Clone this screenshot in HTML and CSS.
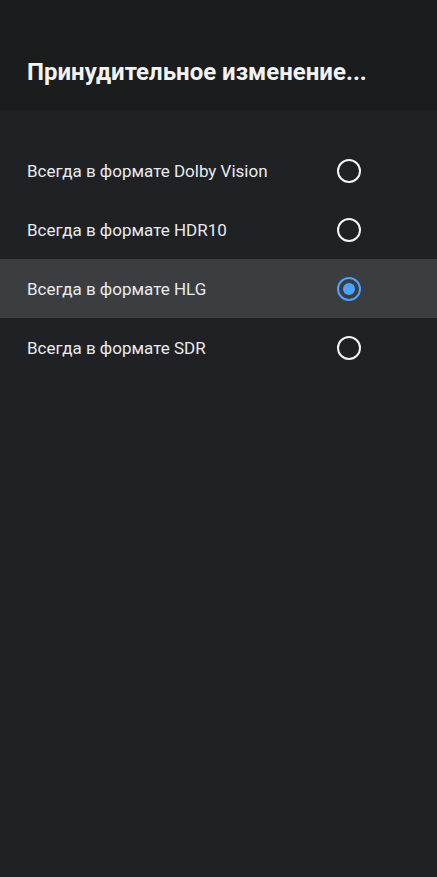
FILE: index.html
```html
<!DOCTYPE html>
<html lang="ru">
<head>
    <meta charset="UTF-8">
    <meta name="viewport" content="width=device-width, initial-scale=1.0">
    <title>Принудительное изменение формата</title>
    <link rel="stylesheet" href="styles.css">
</head>
<body>
    <div class="header">
        <h1>Принудительное изменение...</h1>
    </div>

    <div class="options">
        <div class="option">
            <span class="label">Всегда в формате Dolby Vision</span>
            <span class="radio"></span>
        </div>
        <div class="option">
            <span class="label">Всегда в формате HDR10</span>
            <span class="radio"></span>
        </div>
        <div class="option focused">
            <span class="label">Всегда в формате HLG</span>
            <span class="radio checked"></span>
        </div>
        <div class="option">
            <span class="label">Всегда в формате SDR</span>
            <span class="radio"></span>
        </div>
    </div>
</body>
</html>
```

FILE: styles.css
```css
body {
    margin: 0;
    font-family: Roboto, "Noto Sans", sans-serif;
    background-color: #202124;
    color: #e8eaed;
    height: 877px;
}

.header {
    height: 110px;
    background-color: #1b1c1e;
    border-bottom: 1px solid #18191b;
    box-sizing: border-box;
    padding: 0 27px;
    display: flex;
    align-items: flex-end;
}

.header h1 {
    margin: 0 0 23px;
    font-size: 24px;
    font-weight: 700;
    color: #f1f3f4;
}

.options {
    padding-top: 31px;
}

.option {
    height: 59px;
    display: flex;
    align-items: center;
    justify-content: space-between;
    padding: 0 76px 0 27px;
}

.option.focused {
    background-color: #3c3d40;
}

.label {
    font-size: 17px;
}

.radio {
    width: 20px;
    height: 20px;
    border: 2px solid #f1f3f4;
    border-radius: 50%;
    box-sizing: content-box;
    position: relative;
}

.radio.checked {
    border-color: #4ba3ff;
}

.radio.checked::after {
    content: "";
    position: absolute;
    left: 4px;
    top: 4px;
    width: 12px;
    height: 12px;
    border-radius: 50%;
    background-color: #4ba3ff;
}
```
